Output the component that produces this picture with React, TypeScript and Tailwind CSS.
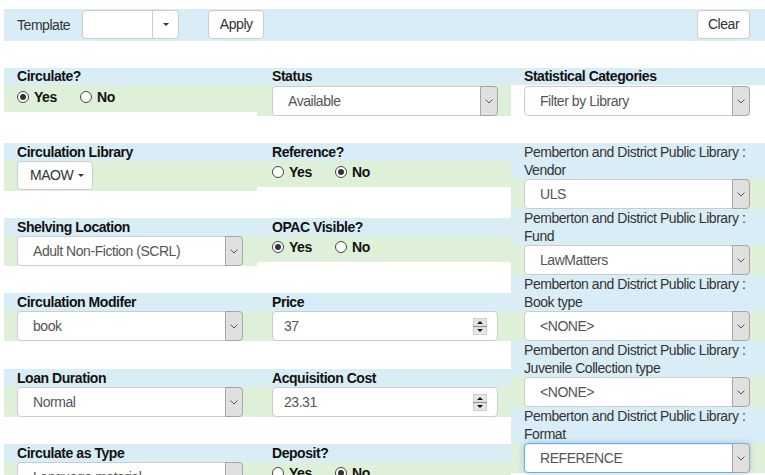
import { FC, ReactNode } from "react";

const Caret: FC = () => (
  <span className="inline-block w-0 h-0 border-x-[3px] border-x-transparent border-t-[3px] border-t-[#333]" />
);

const Chevron: FC = () => (
  <svg width="8" height="5" viewBox="0 0 8 5">
    <polyline points="0.5,0.5 4,4 7.5,0.5" fill="none" stroke="#555" strokeWidth="1" />
  </svg>
);

const Select: FC<{ value: string; focused?: boolean }> = ({ value, focused }) => (
  <div
    className={`flex items-center w-[226px] h-[30px] rounded-[4px] border bg-white ${
      focused
        ? "border-[#66afe9] shadow-[inset_0_1px_1px_rgba(0,0,0,0.075),0_0_6px_rgba(102,175,233,0.6)]"
        : "border-[#ccc]"
    }`}
  >
    <span className="pl-[15px] text-[14px] leading-[18px] text-[#555] whitespace-nowrap">{value}</span>
    <span className="ml-auto -my-px -mr-px self-stretch w-[18px] flex items-center justify-center bg-[#e0e0e0] border border-[#a6a6a6] rounded-r-[4px]">
      <Chevron />
    </span>
  </div>
);

const NumberInput: FC<{ value: string }> = ({ value }) => (
  <div className="flex items-center w-[226px] h-[30px] rounded-[4px] border border-[#ccc] bg-white">
    <span className="pl-[11px] text-[14px] leading-[18px] text-[#555]">{value}</span>
    <svg className="ml-auto mr-[10px]" width="14" height="17" viewBox="0 0 14 17">
      <rect x="0.5" y="0.5" width="13" height="7.5" fill="#e6e6e6" stroke="#cfcfcf" />
      <rect x="0.5" y="9" width="13" height="7.5" fill="#e6e6e6" stroke="#cfcfcf" />
      <line x1="0" y1="8.5" x2="14" y2="8.5" stroke="#9a9a9a" />
      <path d="M4 6 L7 3 L10 6 Z" fill="#111" />
      <path d="M4 11 L7 14 L10 11 Z" fill="#111" />
    </svg>
  </div>
);

const Radio: FC<{ checked?: boolean; label: string; wide?: boolean }> = ({ checked, label, wide }) => (
  <span className={`flex items-center ${wide ? "w-[63px]" : ""}`}>
    <span className="flex items-center justify-center w-[12px] h-[12px] rounded-full border border-[#444] bg-white">
      {checked && <span className="w-[6px] h-[6px] rounded-full bg-[#333]" />}
    </span>
    <span className="ml-[5px] text-[14px] font-bold text-[#111] leading-[16px]">{label}</span>
  </span>
);

const YesNo: FC<{ yes: boolean }> = ({ yes }) => (
  <div className="flex items-center h-[26px] pb-[5px]">
    <Radio checked={yes} label="Yes" wide />
    <Radio checked={!yes} label="No" />
  </div>
);

const Field: FC<{
  label: string;
  h: string;
  pad: string;
  first?: boolean;
  children: ReactNode;
}> = ({ label, h, pad, first, children }) => (
  <div className={h}>
    <div
      className={`${first ? "h-[17px] leading-[17px]" : "h-[18px] leading-[18px]"} ${pad} bg-[#d9edf7] text-[14px] font-bold text-[#111] whitespace-nowrap`}
    >
      {label}
    </div>
    <div className={`${pad} bg-[#dff0d8] ${first ? "pt-px" : ""}`}>{children}</div>
  </div>
);

const StatCat: FC<{ name: string; value: string; focused?: boolean }> = ({ name, value, focused }) => (
  <div className="h-[66px]">
    <div className="h-[36px] pl-[13px] bg-[#d9edf7] text-[14px] leading-[18px] text-[#333]">
      <div className="whitespace-nowrap">Pemberton and District Public Library :</div>
      <div>{name}</div>
    </div>
    <div className="h-[30px] pl-[13px] bg-[#dff0d8]">
      <Select value={value} focused={focused} />
    </div>
  </div>
);

const Button: FC<{ className?: string; children: ReactNode }> = ({ className = "", children }) => (
  <button
    className={`h-[29px] rounded-[4px] border border-[#ccc] bg-white text-[14px] text-[#333] ${className}`}
  >
    {children}
  </button>
);

const App: FC = () => {
  const p1 = "pl-[13px]";
  const p2 = "pl-[15px]";

  return (
    <div className="w-[765px] h-[475px] overflow-hidden bg-white pl-[4px] pt-[9px] tracking-[-0.45px] font-['Liberation_Sans',Arial,sans-serif]">
      <div className="flex items-start pt-px h-[32px] bg-[#d9edf7] pl-[13px] pr-[15px]">
        <span className="mt-[5px] text-[14px] text-[#333]">Template</span>
        <div className="flex ml-[12px] h-[29px]">
          <div className="w-[71px] h-[29px] rounded-l-[4px] border border-[#ccc] bg-white" />
          <div className="flex items-center justify-center w-[27px] h-[29px] -ml-px rounded-r-[4px] border border-[#ccc] bg-white">
            <Caret />
          </div>
        </div>
        <Button className="ml-[29px] w-[56px]">Apply</Button>
        <Button className="ml-auto w-[53px]">Clear</Button>
      </div>

      <div className="flex mt-[27px]">
        <div className="w-[253px] shrink-0">
          <Field label="Circulate?" h="h-[75px]" pad={p1} first>
            <YesNo yes />
          </Field>
          <Field label="Circulation Library" h="h-[75px]" pad={p1}>
            <div className="h-[30px]">
              <Button className="flex items-center w-[76px] pl-[12px] gap-[5px]">
                MAOW <Caret />
              </Button>
            </div>
          </Field>
          <Field label="Shelving Location" h="h-[75px]" pad={p1}>
            <Select value="Adult Non-Fiction (SCRL)" />
          </Field>
          <Field label="Circulation Modifer" h="h-[76px]" pad={p1}>
            <Select value="book" />
          </Field>
          <Field label="Loan Duration" h="h-[75px]" pad={p1}>
            <Select value="Normal" />
          </Field>
          <Field label="Circulate as Type" h="h-[75px]" pad={p1}>
            <Select value="Language material" />
          </Field>
        </div>

        <div className="w-[254px] shrink-0">
          <Field label="Status" h="h-[75px]" pad={p2} first>
            <Select value="Available" />
          </Field>
          <Field label="Reference?" h="h-[75px]" pad={p2}>
            <YesNo yes={false} />
          </Field>
          <Field label="OPAC Visible?" h="h-[75px]" pad={p2}>
            <YesNo yes />
          </Field>
          <Field label="Price" h="h-[76px]" pad={p2}>
            <NumberInput value="37" />
          </Field>
          <Field label="Acquisition Cost" h="h-[75px]" pad={p2}>
            <NumberInput value="23.31" />
          </Field>
          <Field label="Deposit?" h="h-[75px]" pad={p2}>
            <YesNo yes={false} />
          </Field>
        </div>

        <div className="flex-1">
          <div className="h-[75px]">
            <div className="h-[17px] leading-[17px] pl-[13px] bg-[#d9edf7] text-[14px] font-bold text-[#111]">
              Statistical Categories
            </div>
            <div className="pl-[13px] pt-px">
              <Select value="Filter by Library" />
            </div>
          </div>
          <StatCat name="Vendor" value="ULS" />
          <StatCat name="Fund" value="LawMatters" />
          <StatCat name="Book type" value="<NONE>" />
          <StatCat name="Juvenile Collection type" value="<NONE>" />
          <StatCat name="Format" value="REFERENCE" focused />
        </div>
      </div>
    </div>
  );
};

export default App;
